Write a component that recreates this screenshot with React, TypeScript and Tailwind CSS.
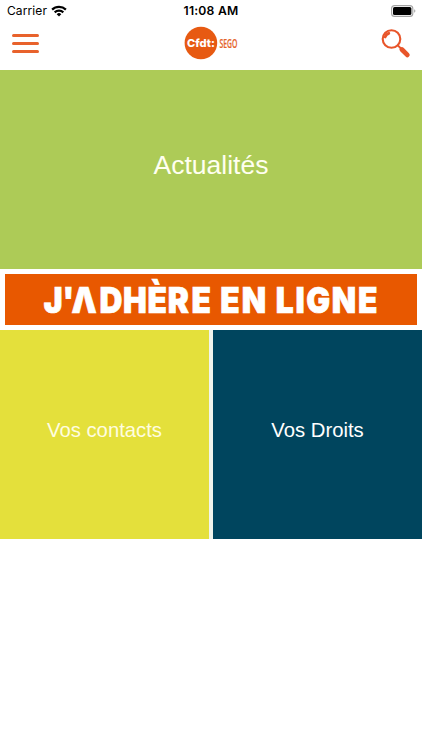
import React from 'react';

const StatusBar: React.FC = () => (
  <div className="grid h-[22px] grid-cols-3 items-center font-['Inter',sans-serif] text-xs leading-none text-black">
    <div className="flex items-center pl-[7px]">
      <span className="text-[12px] tracking-[0.1px]">Carrier</span>
      <svg className="ml-[4px] h-[12px] w-[16px]" viewBox="0 0 16 12" fill="none" stroke="black" strokeWidth="2.2">
        <path d="M1.1 4.6a9.9 9.9 0 0 1 13.8 0" />
        <path d="M3.7 7.4a6.2 6.2 0 0 1 8.6 0" />
        <path d="M8 11.5 5.7 9.2a3.3 3.3 0 0 1 4.6 0z" fill="black" stroke="none" />
      </svg>
    </div>
    <span className="pt-px text-center text-[12.2px] font-semibold tracking-[0.2px]">11:08 AM</span>
    <div className="flex justify-end pr-[6px]">
      <svg className="h-[12px] w-[25px]" viewBox="0 0 25 12">
        <rect x="0.6" y="0.6" width="21.2" height="10.8" rx="3" fill="white" stroke="#a3a3a3" strokeWidth="1.1" />
        <rect x="2" y="2" width="18.4" height="8" rx="1.6" fill="black" />
        <path d="M23.2 4.2c1.6.7 1.6 2.9 0 3.6z" fill="#a3a3a3" />
      </svg>
    </div>
  </div>
);

const Header: React.FC = () => (
  <header className="flex h-[48.4px] items-start justify-between pl-3 pr-[11px]">
    <button className="mt-[11.5px] flex w-[27px] flex-col gap-[4.5px]" aria-label="Menu">
      <span className="h-[3.5px] w-full rounded-full bg-[#e8622c]" />
      <span className="h-[3.5px] w-full rounded-full bg-[#e8622c]" />
      <span className="h-[3.5px] w-full rounded-full bg-[#e8622c]" />
    </button>
    <svg className="ml-[2px] mt-[4px] h-[34px] w-[56px] overflow-visible" viewBox="0 0 56 34">
      <circle cx="17.9" cy="17" r="16.3" fill="#e75a12" />
      <text x="4" y="21" textLength="28" lengthAdjust="spacingAndGlyphs" fill="white" className="font-['Inter',sans-serif] text-[11px] font-extrabold">
        Cfdt:
      </text>
      <text x="36.4" y="21.5" textLength="18" lengthAdjust="spacingAndGlyphs" fill="#e5632a" stroke="#e5632a" strokeWidth="0.2" className="font-['Open_Sans',sans-serif] text-[13px] font-semibold">
        SEGO
      </text>
    </svg>
    <button className="mt-[6px]" aria-label="Rechercher">
      <svg className="h-[31px] w-[30px]" viewBox="0 0 30 31" fill="none" stroke="#e8552a" strokeLinecap="round">
        <circle cx="10.5" cy="11" r="8.8" strokeWidth="2.1" />
        <path d="M4.2 9c.5-1.9 1.7-3.1 3.6-3.7" strokeWidth="2.8" />
        <path d="m16.8 17.4 3.4 3.4" strokeWidth="2" />
        <path d="m20.9 21.5 5.4 5.4" strokeWidth="4.8" />
      </svg>
    </button>
  </header>
);

const JoinBanner: React.FC = () => (
  <div className="h-[61px] px-[5px] pb-[5px] pt-[5px]">
    <div className="h-[51px] bg-[#e85800]">
      <svg className="h-[51px] w-[412px]" viewBox="0 0 412 51" fill="white" stroke="white" strokeWidth="0.7">
        <g transform="scale(0.88 1)" className="font-['Inter',sans-serif] text-[36px] font-black">
          <text x="44 65.3 75.5 107.4 134 162 185 212" y="39.2">J'ΛDHÈRE</text>
          <text x="244.7 269.1" y="39.2">EN</text>
          <text x="307.7 330.2 342.2 371.4 401" y="39.2">LIGNE</text>
        </g>
      </svg>
    </div>
  </div>
);

interface TileProps {
  label: string;
  className: string;
}

const Tile: React.FC<TileProps> = ({ label, className }) => (
  <button className={`flex items-center justify-center ${className}`}>{label}</button>
);

export default function App() {
  return (
    <div className="h-[750px] w-[422px] overflow-hidden bg-white font-['Liberation_Sans',Arial,sans-serif] text-white">
      <StatusBar />
      <Header />
      <main>
        <Tile label="Actualités" className="h-[198.6px] w-full bg-[#adcb57] pb-[7px] text-[26.5px] text-[#fffff0]" />
        <JoinBanner />
        <div className="grid h-[209px] grid-cols-2 gap-1 bg-[#f1f4ec]">
          <Tile label="Vos contacts" className="bg-[#e4e03b] pb-[9px] text-[20.3px] text-[#fffde0]" />
          <Tile label="Vos Droits" className="bg-[#00455e] pb-[9px] text-[20.3px]" />
        </div>
      </main>
    </div>
  );
}
